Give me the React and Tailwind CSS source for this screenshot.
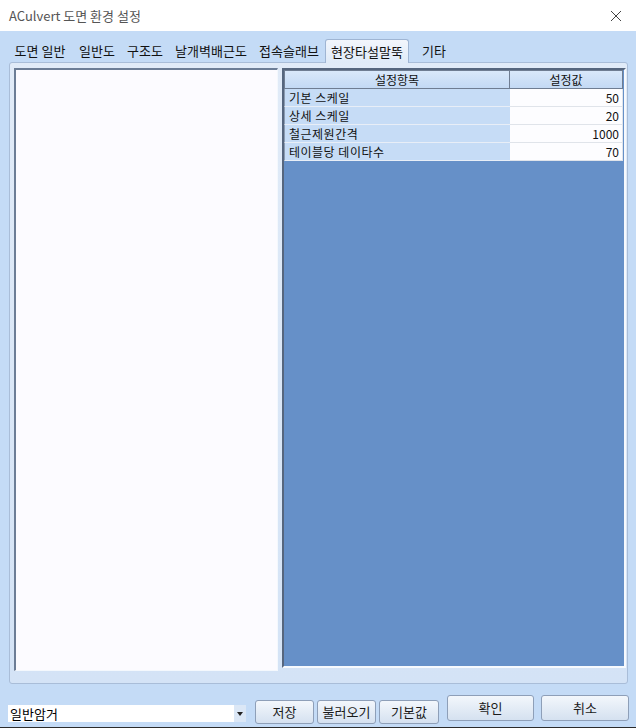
import React from "react";

const FONT = { fontFamily: '"Noto Sans CJK KR", "Noto Sans", sans-serif' };

const tabs = [
  { label: "도면 일반", w: "w-[66px]" },
  { label: "일반도", w: "w-[48px]" },
  { label: "구조도", w: "w-[48px]" },
  { label: "날개벽배근도", w: "w-[84px]" },
  { label: "접속슬래브", w: "w-[72px]" },
  { label: "현장타설말뚝", w: "w-[84px]", active: true },
  { label: "기타", w: "w-[50px]" },
];

const rows = [
  ["기본 스케일", "50"],
  ["상세 스케일", "20"],
  ["철근제원간격", "1000"],
  ["테이블당 데이타수", "70"],
];

function Btn({ children, w, h }) {
  return (
    <div
      className={`${w} ${h} flex items-center justify-center rounded-[3px] border border-[#8e9fb8] bg-gradient-to-b from-[#f3f7fc] to-[#d5e1f0] text-[13px] text-[#1a1a1a]`}
    >
      {children}
    </div>
  );
}

export default function App() {
  return (
    <div
      className="w-[636px] h-[728px] flex flex-col bg-[#c4dbf6] overflow-hidden border-b border-[#2b2b2b]"
      style={FONT}
    >
      {/* title bar */}
      <div className="h-[31px] bg-white flex items-center justify-between pl-[9px] pr-[14px] shrink-0">
        <span className="text-[13px] text-[#555]">ACulvert 도면 환경 설정</span>
        <svg width="12" height="12" viewBox="0 0 12 12">
          <path d="M1 1L11 11M11 1L1 11" stroke="#444" strokeWidth="1" />
        </svg>
      </div>

      {/* tabs */}
      <div className="flex items-end h-[31px] pl-[7px] shrink-0">
        {tabs.map((t) =>
          t.active ? (
            <div
              key={t.label}
              className={`${t.w} h-[24px] flex items-center justify-center text-[13px] text-[#111] bg-gradient-to-b from-[#f2f6fc] to-[#dfeaf8] border border-b-0 border-[#9fb5d3] rounded-t-[3px] relative top-[1px] z-10`}
            >
              {t.label}
            </div>
          ) : (
            <div
              key={t.label}
              className={`${t.w} h-[22px] flex items-center justify-center text-[13px] text-[#111]`}
            >
              {t.label}
            </div>
          )
        )}
      </div>

      {/* tab panel */}
      <div className="ml-[9px] w-[619px] h-[622px] border border-[#a9bdd8] rounded-[3px] bg-gradient-to-b from-[#e1ebf8] to-[#d4e3f6] flex gap-[4px] pl-[4px] pt-[5px] shrink-0">
        {/* left panel */}
        <div className="w-[264px] h-[603px] border-l-2 border-t-2 border-[#6c7d96] border-r border-b border-r-[#f4f8fd] border-b-[#f4f8fd] bg-[#fcfbff]" />

        {/* right panel */}
        <div className="w-[344px] h-[600px] border-l-2 border-t-2 border-l-[#56667e] border-t-[#56667e] border-r-2 border-b-2 border-r-[#f6f9fd] border-b-[#f6f9fd] bg-[#6690c8] flex flex-col">
          <div className="flex h-[19px] text-[12px] text-[#111]">
            <div className="w-[226px] border border-[#6f7d92] bg-gradient-to-b from-[#d9e8fa] to-[#c3d9f4] flex items-center justify-center">
              설정항목
            </div>
            <div className="w-[113px] border border-l-0 border-[#6f7d92] bg-gradient-to-b from-[#d9e8fa] to-[#c3d9f4] flex items-center justify-center">
              설정값
            </div>
          </div>
          {rows.map(([k, v]) => (
            <div key={k} className="flex h-[18px] text-[12px] text-[#111]">
              <div className="w-[226px] bg-[#c6dcf6] border-l border-b border-[#8a9ab0] border-b-[#e8eef7] flex items-center pl-[4px] tracking-[0.5px]">
                {k}
              </div>
              <div className="w-[113px] bg-[#fdfdff] border-r border-b border-[#e0e4ea] flex items-center justify-end pr-[3px]">
                {v}
              </div>
            </div>
          ))}
        </div>
      </div>

      {/* bottom row */}
      <div className="flex items-start pl-[8px] mt-[11px]">
        <div className="w-[238px] h-[17px] mt-[10px] bg-white flex items-center justify-between">
          <span className="text-[13px] text-black pl-[2px] leading-none">일반암거</span>
          <div className="w-[12px] h-[17px] bg-[#dbe7f6] flex items-center justify-center">
            <svg width="6" height="4" viewBox="0 0 6 4">
              <path d="M0 0H6L3 4Z" fill="#222" />
            </svg>
          </div>
        </div>
        <div className="ml-[9px] mt-[5px] flex gap-[3px]">
          <Btn w="w-[59px]" h="h-[24px]">저장</Btn>
          <Btn w="w-[59px]" h="h-[24px]">불러오기</Btn>
          <Btn w="w-[60px]" h="h-[24px]">기본값</Btn>
        </div>
        <div className="ml-[8px] flex gap-[7px]">
          <Btn w="w-[87px]" h="h-[26px]">확인</Btn>
          <Btn w="w-[88px]" h="h-[26px]">취소</Btn>
        </div>
      </div>
    </div>
  );
}
